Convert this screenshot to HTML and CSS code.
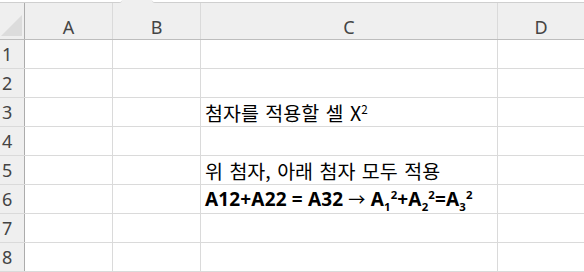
FILE: index.html
```html
<!DOCTYPE html>
<html lang="ko">
<head>
<meta charset="utf-8">
<link rel="stylesheet" href="styles.css">
</head>
<body>
<div class="sheet">
  <div class="tabs">
    <div class="tab tab-left"></div>
    <div class="tab-gap"></div>
    <div class="tab tab-right"></div>
  </div>
  <div class="row hdr">
    <div class="corner"><span class="tri"></span></div>
    <div class="ch colA">A</div>
    <div class="ch colB">B</div>
    <div class="ch colC">C</div>
    <div class="ch colD">D</div>
  </div>
  <div class="row"><div class="rh">1</div><div class="c colA"></div><div class="c colB"></div><div class="c colC"></div><div class="c colD"></div></div>
  <div class="row"><div class="rh">2</div><div class="c colA"></div><div class="c colB"></div><div class="c colC"></div><div class="c colD"></div></div>
  <div class="row"><div class="rh">3</div><div class="c colA"></div><div class="c colB"></div><div class="c colC"><span class="txt">첨자를 적용할 셀 X<sup>2</sup></span></div><div class="c colD"></div></div>
  <div class="row"><div class="rh">4</div><div class="c colA"></div><div class="c colB"></div><div class="c colC"></div><div class="c colD"></div></div>
  <div class="row"><div class="rh">5</div><div class="c colA"></div><div class="c colB"></div><div class="c colC"><span class="txt">위 첨자, 아래 첨자 모두 적용</span></div><div class="c colD"></div></div>
  <div class="row"><div class="rh">6</div><div class="c colA"></div><div class="c colB"></div><div class="c colC"><span class="txt bold">A12+A22 = A32 <span class="arrow">→</span> A<sub>1</sub><sup>2</sup>+A<sub>2</sub><sup>2</sup>=A<sub>3</sub><sup>2</sup></span></div><div class="c colD"></div></div>
  <div class="row"><div class="rh">7</div><div class="c colA"></div><div class="c colB"></div><div class="c colC"></div><div class="c colD"></div></div>
  <div class="row"><div class="rh">8</div><div class="c colA"></div><div class="c colB"></div><div class="c colC"></div><div class="c colD"></div></div>
</div>
</body>
</html>
```
FILE: styles.css
```css
html, body {
  margin: 0;
  padding: 0;
  background: #ffffff;
}
.sheet {
  width: 584px;
  height: 272px;
  overflow: hidden;
  font-family: "Noto Sans", "Noto Sans CJK KR", sans-serif;
}
.tabs {
  display: flex;
  height: 3px;
  background: #efefef;
}
.tab {
  height: 2px;
  background: #ffffff;
  border-bottom: 1px solid #cfcfcf;
}
.tab-left {
  width: 122px;
  border-bottom-right-radius: 4px;
}
.tab-gap {
  width: 30px;
}
.tab-right {
  flex: 1;
  border-bottom-left-radius: 4px;
}
.row {
  display: flex;
  height: 29px;
  box-sizing: border-box;
  border-bottom: 1px solid #dadada;
}
.row.hdr {
  height: 37px;
  background: #efefef;
  border-bottom: 1px solid #bdbdbd;
}
.corner, .rh {
  width: 25px;
  flex: none;
  box-sizing: border-box;
  border-right: 1px solid #acacac;
  background: #efefef;
}
.corner {
  position: relative;
}
.tri {
  position: absolute;
  left: 1px;
  top: 12px;
  width: 0;
  height: 0;
  border-style: solid;
  border-width: 0 0 21px 21px;
  border-color: transparent transparent #dcdcdc transparent;
}
.rh {
  font-size: 18px;
  color: #444444;
  padding-left: 2px;
  line-height: 28px;
}
.c, .ch {
  box-sizing: border-box;
  border-right: 1px solid #dadada;
  flex: none;
}
.ch {
  font-size: 18px;
  color: #444444;
  text-align: center;
  line-height: 20px;
  padding-top: 14px;
}
.colA { width: 88px; }
.colB { width: 88px; }
.colC { width: 297px; }
.colD { flex: 1; border-right: none; }
.c.colC {
  display: flex;
  align-items: flex-end;
  padding-left: 4px;
}
.txt {
  font-family: "Noto Sans CJK KR", "Noto Sans", sans-serif;
  font-size: 19.5px;
  line-height: 26px;
  word-spacing: 1px;
  color: #000000;
  white-space: nowrap;
}
.bold {
  font-family: "Noto Sans", "Noto Sans CJK KR", sans-serif;
  font-weight: 700;
  font-size: 19px;
  letter-spacing: 0.15px;
  word-spacing: 0;
}
.arrow {
  font-weight: 400;
  font-size: 0.9em;
}
sup, sub {
  font-size: 0.6em;
  line-height: 0;
}
```
